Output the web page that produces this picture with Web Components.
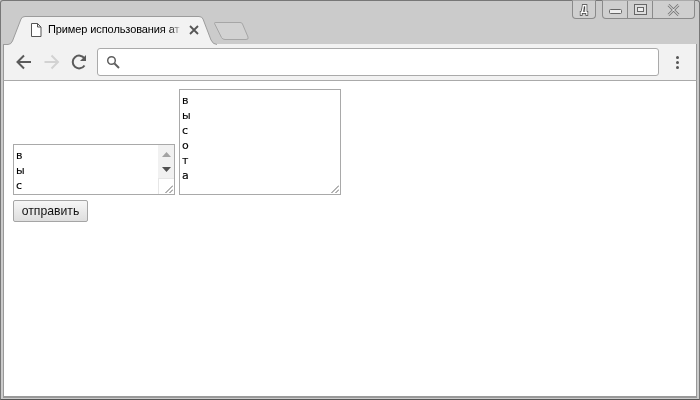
<!DOCTYPE html>
<html lang="ru">
<head>
<meta charset="utf-8">
<title>Пример использования атрибута</title>
<style>
  html, body { margin: 0; height: 100%; background: #ccc; }
</style>
</head>
<body>
<browser-window>
  <browser-tab slot="tabs">Пример использования атрибута rows</browser-tab>
  <window-controls slot="controls"></window-controls>
  <browser-toolbar slot="toolbar"></browser-toolbar>
  <demo-form>
    <fake-textarea slot="fields" height="51" scrollbar>в ы с</fake-textarea>
    <fake-textarea slot="fields" height="106">в ы с о т а</fake-textarea>
    <push-button slot="submit">отправить</push-button>
  </demo-form>
</browser-window>

<script>
const windowTemplate = document.createElement("template");
windowTemplate.innerHTML = `
  <style>
    :host {
      display: block;
      box-sizing: border-box;
      width: 700px;
      height: 400px;
      padding: 0 2px 1px 2px;
      background: #cbcbcb;
      border: 1px solid #777;
      border-bottom-color: #555;
      border-radius: 3px 3px 0 0;
      font-family: "Liberation Sans", Arial, sans-serif;
      filter: grayscale(1);
    }
    .frame {
      display: flex;
      flex-direction: column;
      height: 100%;
    }
    .strip {
      display: flex;
      justify-content: space-between;
      align-items: flex-start;
      flex: none;
      height: 43px;
    }
    .body {
      flex: 1;
      min-height: 0;
      background: #fff;
      border: 1px solid #999;
      border-width: 0 1px 2px;
    }
  </style>
  <div class="frame">
    <div class="strip">
      <slot name="tabs"></slot>
      <slot name="controls"></slot>
    </div>
    <slot name="toolbar"></slot>
    <div class="body"><slot></slot></div>
  </div>
`;

class BrowserWindow extends HTMLElement {
  constructor() {
    super();
    this.attachShadow({ mode: "open" });
    this.shadowRoot.appendChild(windowTemplate.content.cloneNode(true));
  }
}

const tabTemplate = document.createElement("template");
tabTemplate.innerHTML = `
  <style>
    :host {
      display: block;
      position: relative;
      width: 250px;
      height: 43px;
      flex: none;
    }
    svg.shape {
      position: absolute;
      left: 0;
      top: 0;
    }
    .inner {
      position: relative;
      display: flex;
      align-items: center;
      gap: 6px;
      width: 172px;
      height: 28px;
      margin-left: 27px;
      padding-top: 15px;
    }
    .title {
      width: 132px;
      flex: none;
      margin-top: -2px;
      overflow: hidden;
      white-space: nowrap;
      font-size: 11px;
      letter-spacing: -0.1px;
      color: #000;
      -webkit-mask-image: linear-gradient(to right, #000 122px, transparent 134px);
      mask-image: linear-gradient(to right, #000 122px, transparent 134px);
    }
    .close { margin-left: 3px; flex: none; }
  </style>
  <svg class="shape" width="250" height="44" viewBox="0 0 250 44">
    <path d="M211.5 22.5 Q211 21.5 213 21.5 H237 Q239 21.5 239.5 23 L245 36 Q246 38.5 243 38.5 H222 Q219.5 38.5 218.5 36.5 Z" fill="#d2d2d2" stroke="#a6a6a6"/>
    <path d="M0 43.5 H5 Q8 43.5 9.5 40 L18 18 Q19 15.5 22 15.5 H196 Q199 15.5 200 18 L208 39 Q210 43.5 214 43.5 V44 H0 Z" fill="#f2f2f2"/>
    <path d="M0 43.5 H5 Q8 43.5 9.5 40 L18 18 Q19 15.5 22 15.5 H196 Q199 15.5 200 18 L208 39 Q210 43.5 214 43.5" fill="none" stroke="#9c9c9c"/>
  </svg>
  <div class="inner">
    <svg width="12" height="14" viewBox="0 0 12 14" style="flex:none">
      <path d="M1.5 .5 H7.5 L11 4 V13.5 H1.5 Z M7.5 .5 V4 H11" fill="#fff" stroke="#555"/>
    </svg>
    <span class="title"><slot></slot></span>
    <svg class="close" width="10" height="10" viewBox="0 0 10 10">
      <path d="M1 1 L9 9 M9 1 L1 9" stroke="#555" stroke-width="1.8"/>
    </svg>
  </div>
`;

class BrowserTab extends HTMLElement {
  constructor() {
    super();
    this.attachShadow({ mode: "open" });
    this.shadowRoot.appendChild(tabTemplate.content.cloneNode(true));
  }
}

const controlsTemplate = document.createElement("template");
controlsTemplate.innerHTML = `
  <style>
    :host {
      display: flex;
      gap: 6px;
      flex: none;
      margin-top: -1px;
      margin-right: 2px;
    }
    .group {
      display: flex;
      height: 17px;
      background: #cfcfcf;
      border: 1px solid #8a8a8a;
      border-top-color: #aaa;
      border-radius: 0 0 4px 4px;
    }
    .group > div {
      display: flex;
      align-items: center;
      justify-content: center;
      height: 100%;
    }
    .group > div + div { border-left: 1px solid #8a8a8a; }
    .badge {
      width: 22px;
      font: bold 10px "Liberation Sans", Arial, sans-serif;
      color: #fff;
      -webkit-text-stroke: 1.5px #444;
      paint-order: stroke fill;
    }
    .min { width: 24px; }
    .max { width: 24px; }
    .x { width: 41px; }
  </style>
  <div class="group"><div class="badge">Д</div></div>
  <div class="group">
    <div class="min">
      <svg width="13" height="6" viewBox="0 0 13 6" style="margin-top:4px"><rect x=".5" y=".5" width="12" height="4" rx="1" fill="#eee" stroke="#666"/></svg>
    </div>
    <div class="max">
      <svg width="13" height="11" viewBox="0 0 13 11"><rect x=".5" y=".5" width="12" height="10" fill="#ddd" stroke="#666"/><rect x="3.5" y="3.5" width="6" height="4" fill="#eee" stroke="#666"/></svg>
    </div>
    <div class="x">
      <svg width="13" height="12" viewBox="0 0 13 12"><path d="M1.5 1 L11.5 11 M11.5 1 L1.5 11" stroke="#777" stroke-width="2.6"/><path d="M1.5 1 L11.5 11 M11.5 1 L1.5 11" stroke="#fff" stroke-width="1"/></svg>
    </div>
  </div>
`;

class WindowControls extends HTMLElement {
  constructor() {
    super();
    this.attachShadow({ mode: "open" });
    this.shadowRoot.appendChild(controlsTemplate.content.cloneNode(true));
  }
}

const toolbarTemplate = document.createElement("template");
toolbarTemplate.innerHTML = `
  <style>
    :host {
      display: flex;
      align-items: center;
      box-sizing: border-box;
      height: 37px;
      padding: 0 0 0 9px;
      background: #f2f2f2;
      border: 1px solid #999;
      border-width: 0 1px 1px;
      border-bottom-color: #aaa;
      flex: none;
    }
    .nav { display: flex; gap: 6px; flex: none; }
    .nav svg { display: block; }
    .omnibox {
      display: flex;
      align-items: center;
      box-sizing: border-box;
      width: 562px;
      height: 28px;
      margin-left: 6px;
      padding-left: 8px;
      background: #fff;
      border: 1px solid #aaa;
      border-radius: 3px;
      flex: none;
    }
    .menu {
      display: flex;
      flex-direction: column;
      gap: 2px;
      margin-left: 17px;
      flex: none;
    }
    .menu i {
      display: block;
      width: 3px;
      height: 3px;
      border-radius: 50%;
      background: #555;
    }
  </style>
  <div class="nav">
    <svg width="22" height="22" viewBox="0 0 22 22">
      <path d="M18 11 H5 M11 4.5 L4.5 11 L11 17.5" fill="none" stroke="#5a5a5a" stroke-width="2"/>
    </svg>
    <svg width="22" height="22" viewBox="0 0 22 22">
      <path d="M3.5 11 H16.5 M10.5 4.5 L17 11 L10.5 17.5" fill="none" stroke="#d2d2d2" stroke-width="2"/>
    </svg>
    <svg width="22" height="22" viewBox="0 0 22 22">
      <path d="M15.5 14.5 A6.4 6.4 0 1 1 15.5 7.5" fill="none" stroke="#5a5a5a" stroke-width="2"/>
      <path d="M17 4 V10 H11 Z" fill="#5a5a5a"/>
    </svg>
  </div>
  <div class="omnibox">
    <svg width="14" height="14" viewBox="0 0 14 14">
      <circle cx="5.5" cy="5.5" r="3.8" fill="none" stroke="#5f5f5f" stroke-width="1.5"/>
      <path d="M8.5 8.5 L13 13" stroke="#5f5f5f" stroke-width="2"/>
    </svg>
  </div>
  <div class="menu"><i></i><i></i><i></i></div>
`;

class BrowserToolbar extends HTMLElement {
  constructor() {
    super();
    this.attachShadow({ mode: "open" });
    this.shadowRoot.appendChild(toolbarTemplate.content.cloneNode(true));
  }
}

const formTemplate = document.createElement("template");
formTemplate.innerHTML = `
  <style>
    :host {
      display: block;
      padding: 8px 9px;
    }
    .fields {
      display: flex;
      align-items: flex-end;
      gap: 4px;
    }
    .submit { margin-top: 5px; }
  </style>
  <div class="fields"><slot name="fields"></slot></div>
  <div class="submit"><slot name="submit"></slot></div>
`;

class DemoForm extends HTMLElement {
  constructor() {
    super();
    this.attachShadow({ mode: "open" });
    this.shadowRoot.appendChild(formTemplate.content.cloneNode(true));
  }
}

const areaTemplate = document.createElement("template");
areaTemplate.innerHTML = `
  <style>
    :host {
      display: block;
      position: relative;
      box-sizing: border-box;
      width: 162px;
      height: var(--box-height);
      background: #fff;
      border: 1px solid #a9a9a9;
      flex: none;
      overflow: hidden;
    }
    .text {
      width: 8px;
      padding: 3px 2px;
      font: 11px/15px "DejaVu Sans", Verdana, sans-serif;
      -webkit-text-stroke: 0.12px #000;
      color: #000;
    }
    .bar {
      position: absolute;
      right: 0;
      top: 0;
      bottom: 0;
      width: 16px;
      display: none;
      flex-direction: column;
      background: #f1f1f1;
    }
    :host([scrollbar]) .bar { display: flex; }
    .arrow {
      display: flex;
      align-items: center;
      justify-content: center;
      flex: none;
    }
    .up { height: 19px; }
    .down { height: 10px; }
    .track { flex: 1; }
    .corner {
      flex: none;
      height: 16px;
      box-sizing: border-box;
      background: #fff;
      border-left: 1px solid #e6e6e6;
      border-top: 1px solid #e6e6e6;
    }
    .grip {
      position: absolute;
      right: 1px;
      bottom: 1px;
    }
  </style>
  <div class="text"><slot></slot></div>
  <div class="bar">
    <div class="arrow up"><svg width="9" height="5" viewBox="0 0 9 5"><path d="M4.5 0 L9 5 H0 Z" fill="#a3a3a3"/></svg></div>
    <div class="arrow down"><svg width="9" height="5" viewBox="0 0 9 5"><path d="M0 0 H9 L4.5 5 Z" fill="#505050"/></svg></div>
    <div class="track"></div>
    <div class="corner"></div>
  </div>
  <svg class="grip" width="8" height="8" viewBox="0 0 8 8">
    <path d="M0.5 8 L8 0.5 M4.5 8 L8 4.5" stroke="#666" stroke-width="1"/>
  </svg>
`;

class FakeTextarea extends HTMLElement {
  constructor() {
    super();
    this.attachShadow({ mode: "open" });
    this.shadowRoot.appendChild(areaTemplate.content.cloneNode(true));
  }
  connectedCallback() {
    this.style.setProperty("--box-height", this.getAttribute("height") + "px");
  }
}

const buttonTemplate = document.createElement("template");
buttonTemplate.innerHTML = `
  <style>
    :host { display: block; width: max-content; }
    button {
      display: block;
      box-sizing: border-box;
      width: 75px;
      height: 22px;
      padding: 0;
      font: 12.2px "Liberation Sans", Arial, sans-serif;
      color: #111;
      background: linear-gradient(#f6f6f6, #dedede);
      border: 1px solid #a5a5a5;
      border-radius: 2px;
    }
  </style>
  <button type="button"><slot></slot></button>
`;

class PushButton extends HTMLElement {
  constructor() {
    super();
    this.attachShadow({ mode: "open" });
    this.shadowRoot.appendChild(buttonTemplate.content.cloneNode(true));
  }
}

customElements.define("browser-window", BrowserWindow);
customElements.define("browser-tab", BrowserTab);
customElements.define("window-controls", WindowControls);
customElements.define("browser-toolbar", BrowserToolbar);
customElements.define("demo-form", DemoForm);
customElements.define("fake-textarea", FakeTextarea);
customElements.define("push-button", PushButton);
</script>
</body>
</html>
